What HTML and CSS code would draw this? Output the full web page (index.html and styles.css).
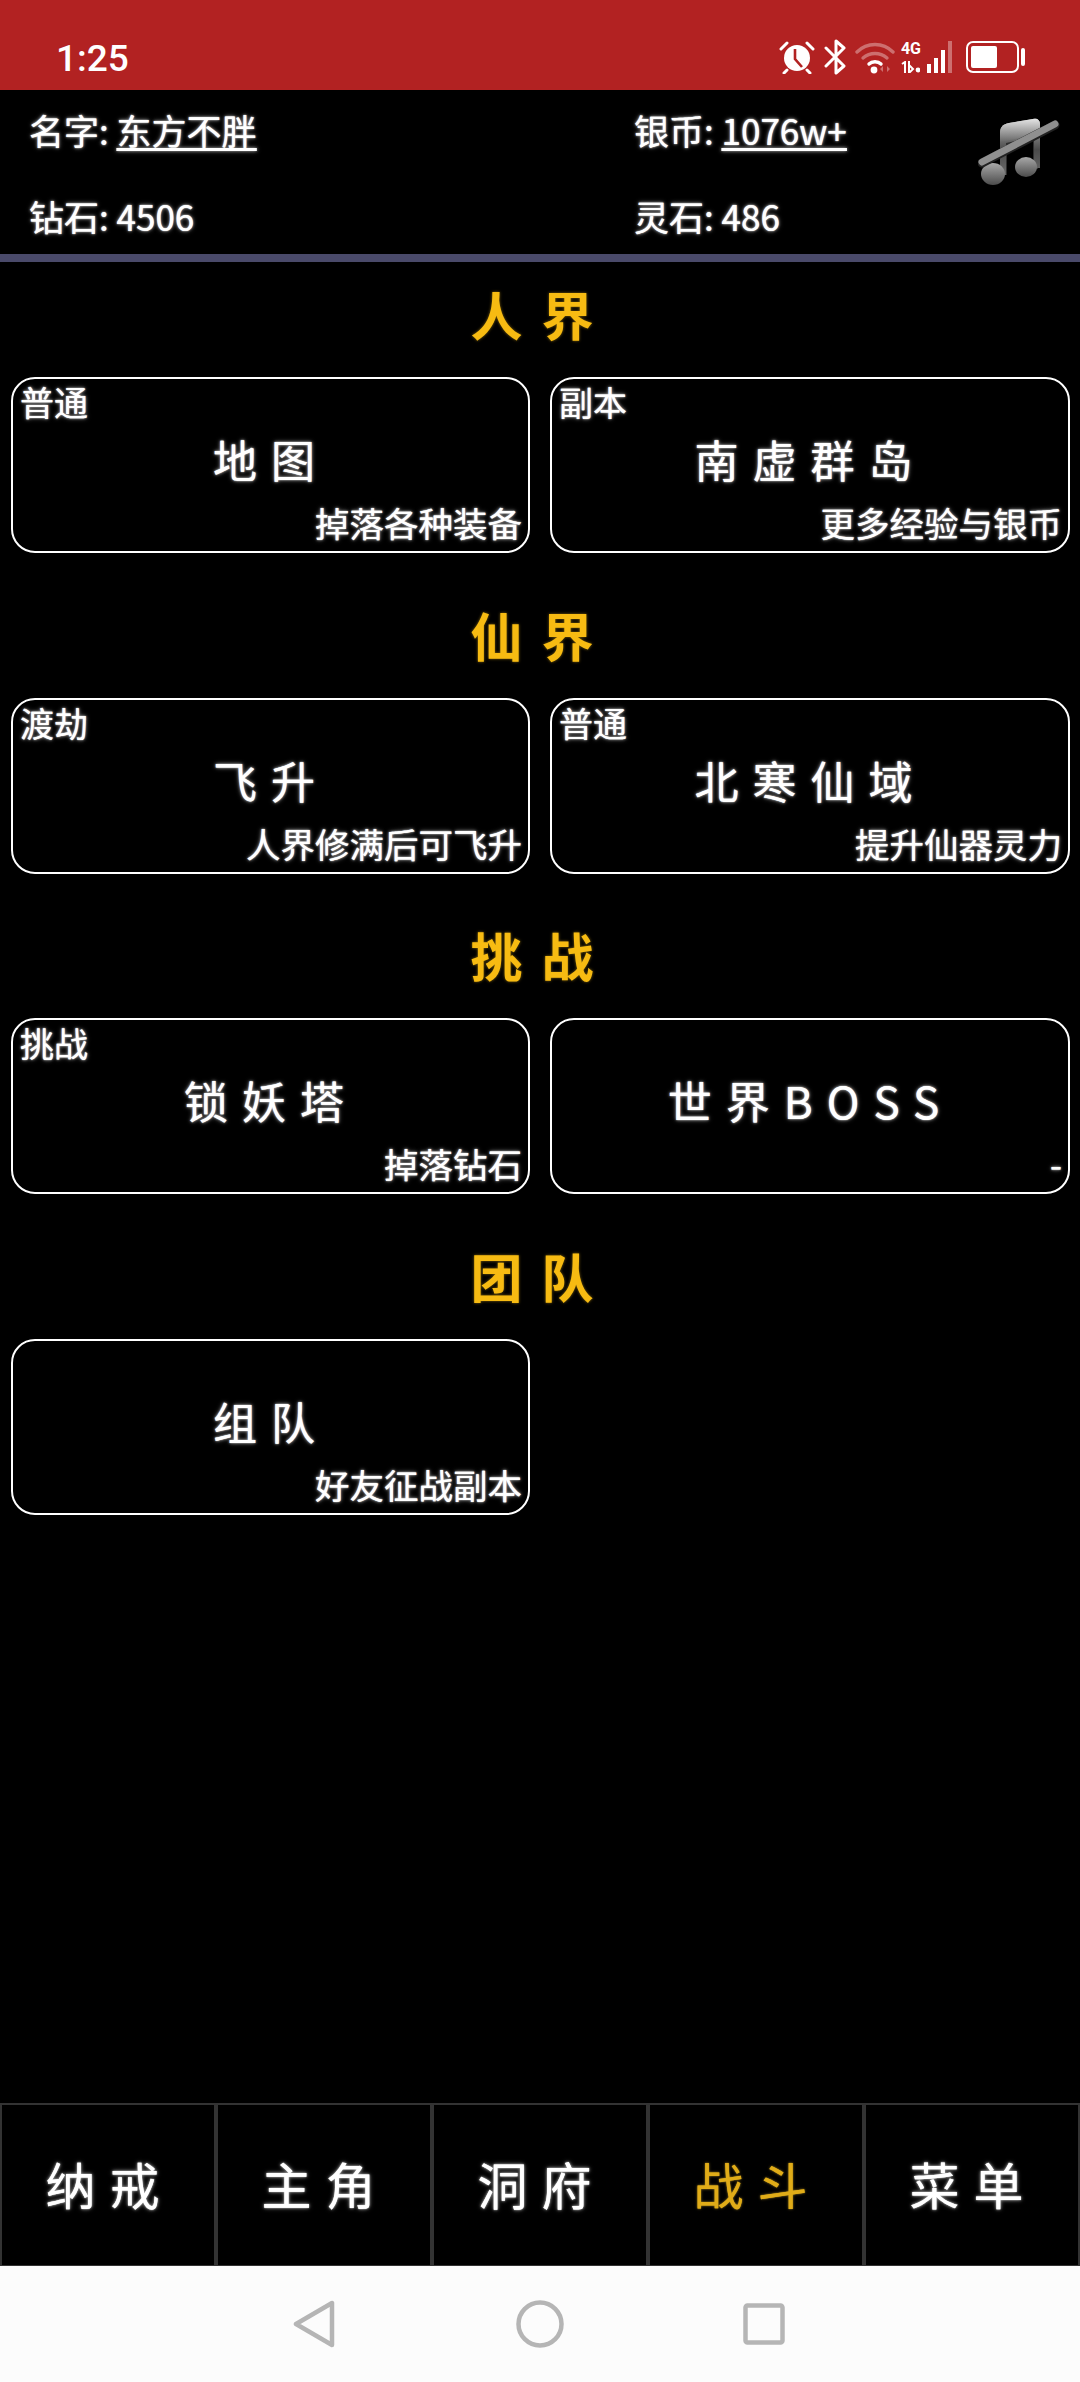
FILE: index.html
```html
<!DOCTYPE html>
<html lang="zh-CN">
<head>
  <meta charset="UTF-8" />
  <meta name="viewport" content="width=device-width, initial-scale=1.0"/>
  <title>战斗</title>
  <link rel="stylesheet" href="styles.css">
</head>
<body>
  <div class="statusbar">
    <span class="time">1:25</span>
    <div class="status-icons">
      <svg width="36" height="34" viewBox="0 0 36 34" fill="none">
        <circle cx="18" cy="18" r="13" fill="#fff"/>
        <path d="M16 9v10l7 8" stroke="#b22222" stroke-width="2.6"/>
        <path d="M2 9l6-6M34 9l-6-6M8 30l-3 3M28 30l3 3" stroke="#fff" stroke-width="3" stroke-linecap="round"/>
      </svg>
      <svg width="22" height="36" viewBox="0 0 22 36" fill="none">
        <path d="M2 9l18 18-8 7V2l8 7L2 27" stroke="#fff" stroke-width="3" stroke-linejoin="round" stroke-linecap="round"/>
      </svg>
      <svg width="40" height="34" viewBox="0 0 40 34" fill="none">
        <path d="M2 12c10-10 26-10 36 0" stroke="#fff" stroke-opacity=".35" stroke-width="3.4" stroke-linecap="round"/>
        <path d="M8 18c7-6 17-6 24 0" stroke="#fff" stroke-opacity=".35" stroke-width="3.4" stroke-linecap="round"/>
        <path d="M14 24c3-3 9-3 12 0" stroke="#fff" stroke-width="3.4" stroke-linecap="round"/>
        <circle cx="19" cy="30" r="3.4" fill="#fff"/>
        <path d="M28 26l-3 3 3 3zM32 26l3 3-3 3z" fill="#fff" fill-opacity=".35"/>
      </svg>
      <div class="signal">
        <div class="signal-text">
          <span class="net">4G</span>
          <svg width="19" height="12" viewBox="0 0 19 12"><path d="M1 3l3-2v11M8 0v12l4-4-4-4" stroke="#fff" stroke-width="2" fill="none"/><circle cx="17" cy="9" r="2.4" fill="#fff"/></svg>
        </div>
        <div class="bars">
          <i class="bar bar-1"></i><i class="bar bar-2"></i><i class="bar bar-3"></i><i class="bar bar-4"></i>
        </div>
      </div>
      <div class="battery"><div class="battery-body"><div class="battery-fill"></div></div><div class="battery-cap"></div></div>
    </div>
  </div>

  <div class="header">
    <div class="stat">名字: <u>东方不胖</u></div>
    <div class="stat">银币: <u>1076w+</u></div>
    <svg class="music" width="84" height="74" viewBox="0 0 84 74" fill="none">
      <defs>
        <linearGradient id="noteGrad" x1="0" y1="0" x2="0" y2="1">
          <stop offset="0" stop-color="#b5b5b5"/>
          <stop offset=".55" stop-color="#4a4a4a"/>
          <stop offset="1" stop-color="#6a6a6a"/>
        </linearGradient>
        <linearGradient id="beamGrad" x1="0" y1="0" x2="0" y2="1">
          <stop offset="0" stop-color="#e4e4e4"/>
          <stop offset="1" stop-color="#666"/>
        </linearGradient>
        <linearGradient id="headGrad" x1="0" y1="0" x2="0" y2="1">
          <stop offset="0" stop-color="#a8a8a8"/>
          <stop offset="1" stop-color="#4c4c4c"/>
        </linearGradient>
      </defs>
      <path d="M24 10h36v44H55V24L29 30v30h-5z" fill="#2e2e2e"/>
      <path d="M22 60V18c0-6 3-9 9-10l24-4c4-1 7 1 7 5v44h-6V22L28 28v32z" fill="url(#noteGrad)"/>
      <path d="M22 18c0-6 3-9 9-10l24-4c4-1 7 1 7 5v10L22 27z" fill="url(#beamGrad)"/>
      <ellipse cx="15" cy="59" rx="12" ry="11" fill="url(#headGrad)"/>
      <ellipse cx="48" cy="52" rx="11" ry="10" fill="url(#headGrad)"/>
      <path d="M4 48L77 10" stroke="#222" stroke-width="9" stroke-linecap="round"/>
      <path d="M4 47L77 9" stroke="#8f8f8f" stroke-width="7" stroke-linecap="round"/>
    </svg>
    <div class="stat">钻石: 4506</div>
    <div class="stat">灵石: 486</div>
  </div>

  <div class="main">
    <section class="group">
      <h2 class="group-title">人界</h2>
      <div class="cards">
        <div class="card"><div class="card-tag">普通</div><div class="card-title">地图</div><div class="card-desc">掉落各种装备</div></div>
        <div class="card"><div class="card-tag">副本</div><div class="card-title">南虚群岛</div><div class="card-desc">更多经验与银币</div></div>
      </div>
    </section>
    <section class="group">
      <h2 class="group-title">仙界</h2>
      <div class="cards">
        <div class="card"><div class="card-tag">渡劫</div><div class="card-title">飞升</div><div class="card-desc">人界修满后可飞升</div></div>
        <div class="card"><div class="card-tag">普通</div><div class="card-title">北寒仙域</div><div class="card-desc">提升仙器灵力</div></div>
      </div>
    </section>
    <section class="group">
      <h2 class="group-title">挑战</h2>
      <div class="cards">
        <div class="card"><div class="card-tag">挑战</div><div class="card-title">锁妖塔</div><div class="card-desc">掉落钻石</div></div>
        <div class="card"><div class="card-tag"></div><div class="card-title">世界BOSS</div><div class="card-desc">-</div></div>
      </div>
    </section>
    <section class="group">
      <h2 class="group-title">团队</h2>
      <div class="cards">
        <div class="card"><div class="card-tag"></div><div class="card-title">组队</div><div class="card-desc">好友征战副本</div></div>
      </div>
    </section>
  </div>

  <div class="tabs">
    <div class="tab">纳戒</div>
    <div class="tab">主角</div>
    <div class="tab">洞府</div>
    <div class="tab active">战斗</div>
    <div class="tab">菜单</div>
  </div>

  <div class="navbar">
    <svg width="42" height="48" viewBox="0 0 42 48" fill="none"><path d="M39 3v42L3 24z" stroke="#b5b5b5" stroke-width="4.5" stroke-linejoin="round"/></svg>
    <svg width="48" height="48" viewBox="0 0 48 48" fill="none"><circle cx="24" cy="24" r="21.5" stroke="#b5b5b5" stroke-width="4.5"/></svg>
    <svg width="42" height="42" viewBox="0 0 42 42" fill="none"><rect x="2.5" y="2.5" width="37" height="37" rx="2" stroke="#b5b5b5" stroke-width="4.5"/></svg>
  </div>
</body>
</html>
```

FILE: styles.css
```css
* {
  box-sizing: border-box;
}

body {
  margin: 0;
  width: 1080px;
  height: 2382px;
  display: flex;
  flex-direction: column;
  background-color: #000;
  color: #fff;
  font-family: "Noto Sans CJK SC", "Noto Sans", sans-serif;
  overflow: hidden;
}

.statusbar {
  height: 90px;
  flex: none;
  background-color: #b22222;
  display: flex;
  align-items: center;
  justify-content: space-between;
  padding: 0 55px 0 56px;
  color: #fff;
}

.statusbar .time {
  font-family: Roboto, sans-serif;
  font-size: 37px;
  font-weight: 500;
  margin-top: 27px;
}

.status-icons {
  display: flex;
  align-items: center;
  gap: 9px;
  margin-top: 24px;
}

.signal {
  display: flex;
  align-items: flex-end;
  gap: 6px;
  height: 32px;
  margin-left: -3px;
}

.signal-text {
  display: flex;
  flex-direction: column;
  justify-content: space-between;
  height: 32px;
}

.net {
  font-family: Roboto, sans-serif;
  font-size: 16px;
  font-weight: 700;
  line-height: 15px;
}

.bars {
  display: flex;
  align-items: flex-end;
  gap: 3px;
}

.bar {
  display: block;
  width: 4px;
  background-color: #fff;
}

.bar-1 { height: 9px; }
.bar-2 { height: 15px; }
.bar-3 { height: 23px; }
.bar-4 { height: 32px; opacity: 0.35; }

.battery {
  display: flex;
  align-items: center;
  gap: 2px;
  margin-left: 5px;
}

.battery-body {
  width: 53px;
  height: 32px;
  border: 2.5px solid #fff;
  border-radius: 7px;
  padding: 3px;
}

.battery-fill {
  width: 26px;
  height: 100%;
  background-color: #fff;
  border-radius: 2px;
}

.battery-cap {
  width: 4px;
  height: 18px;
  background-color: #fff;
  border-radius: 2px;
}

.header {
  height: 172px;
  flex: none;
  display: grid;
  grid-template-columns: 605px 1fr 84px;
  grid-template-rows: 85px 79px;
  padding: 0 18px 0 29px;
  border-bottom: 8px solid #4a4a6a;
}

.stat {
  font-size: 35px;
  line-height: 80px;
  text-shadow: 0 0 1px #fff, 0 0 3px #999, 0 0 5px #666;
}

.stat u {
  text-underline-offset: 3px;
}

.stat:nth-of-type(n+3) {
  line-height: 82px;
}

.music {
  grid-row: 1 / 3;
  grid-column: 3;
  margin-top: 25px;
  filter: blur(0.7px);
}

.main {
  flex: 1;
  padding: 0 11px;
}

.group-title {
  margin: 0;
  height: 115px;
  padding-left: 3px;
  font-size: 52px;
  font-weight: 700;
  line-height: 104px;
  letter-spacing: 19px;
  text-align: center;
  color: #f7bb12;
  text-shadow: 0 0 3px #8a6a10;
}

.cards {
  display: grid;
  grid-template-columns: 519px 520px;
  gap: 20px;
  height: 176px;
  margin-bottom: 29.5px;
}

.card {
  border: 2px solid #fff;
  border-radius: 24px;
  padding: 0 6px 0 7px;
  display: grid;
  grid-template-rows: 47px 70px 53px;
}

.card-tag {
  font-size: 34px;
  line-height: 46px;
  text-shadow: 0 0 1px #fff, 0 0 3px #999, 0 0 5px #666;
}

.card-title {
  font-size: 44px;
  line-height: 66px;
  letter-spacing: 14px;
  text-align: center;
  text-shadow: 0 0 1px #fff, 0 0 3px #999, 0 0 5px #666;
}

.card-desc {
  font-size: 34.5px;
  line-height: 52px;
  text-align: right;
  text-shadow: 0 0 1px #fff, 0 0 3px #999, 0 0 5px #666;
}

.tabs {
  height: 163px;
  flex: none;
  display: grid;
  grid-template-columns: repeat(5, 216px);
}

.tab {
  border: 2px solid #333;
  border-width: 2px 2px 1px;
  font-size: 50px;
  letter-spacing: 14px;
  display: flex;
  align-items: center;
  justify-content: center;
  padding: 0 0 4px 3px;
  text-shadow: 0 0 1px #fff, 0 0 3px #999, 0 0 5px #666;
}

.tab.active {
  color: #e0ac18;
  text-shadow: 0 0 1px #e0ac18, 0 0 3px #7a6420;
}

.navbar {
  height: 116px;
  flex: none;
  background-color: #fcfcfc;
  display: flex;
  align-items: center;
  padding: 0 0 0 293px;
}

.navbar svg:nth-child(2) {
  margin-left: 181px;
}

.navbar svg:nth-child(3) {
  margin-left: 179px;
}
```
